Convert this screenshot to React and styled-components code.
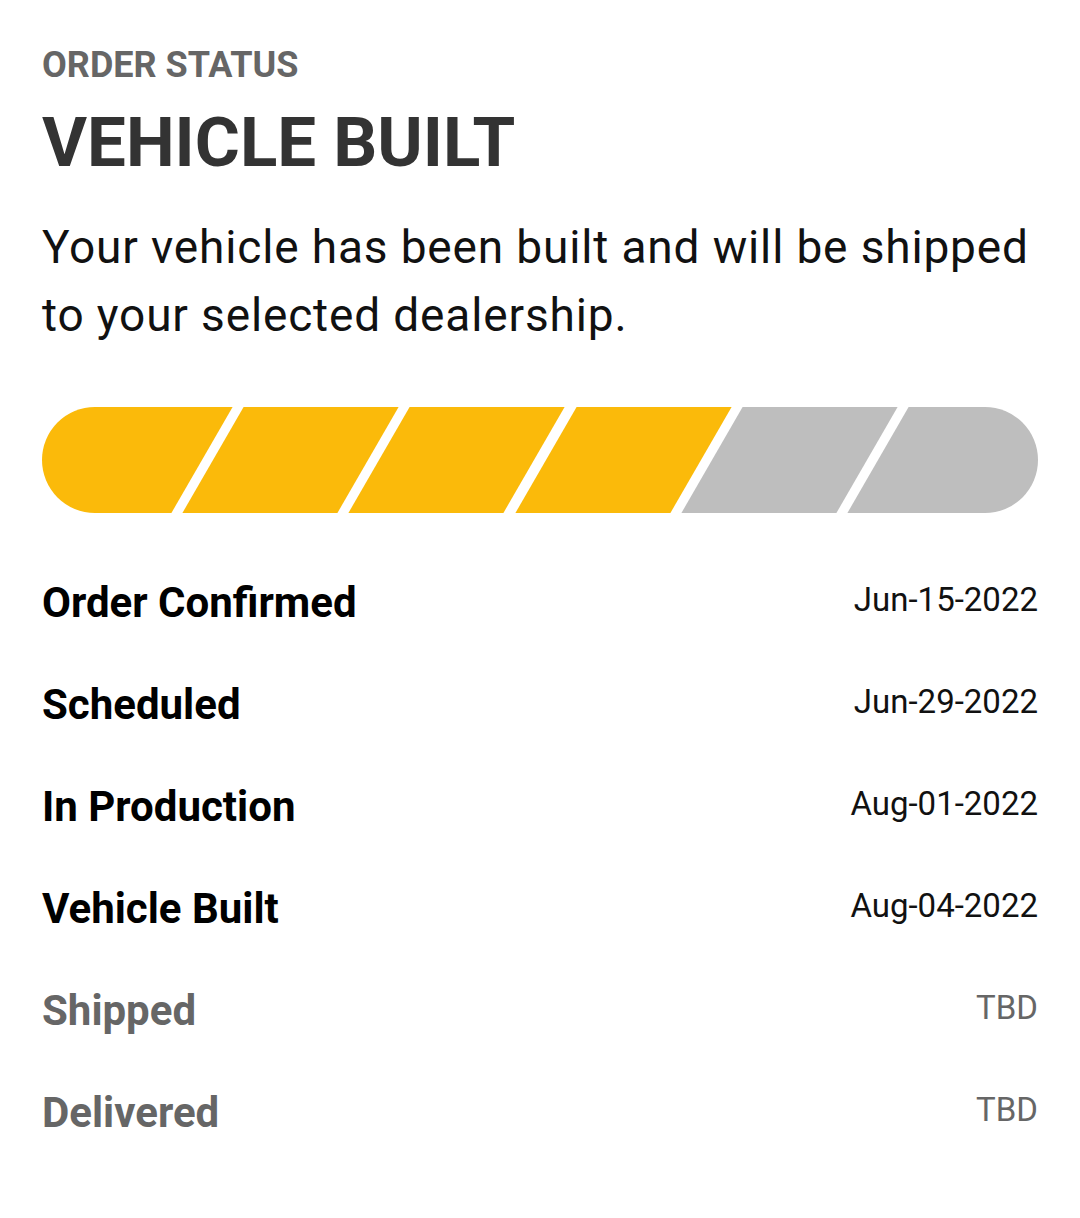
import React from 'react';
import styled, { createGlobalStyle } from 'styled-components';

const GlobalStyle = createGlobalStyle`
  html, body {
    margin: 0;
    padding: 0;
    background: #fff;
  }

  body {
    font-family: Roboto, 'Liberation Sans', Arial, sans-serif;
    -webkit-font-smoothing: antialiased;
  }
`;

const StyledStatusPage = styled.main`
  padding: 44px 42px 60px;
  width: 1080px;
  box-sizing: border-box;
`;

const Eyebrow = styled.div`
  font-size: 36px;
  line-height: 42px;
  font-weight: 700;
  color: #666;
  text-transform: uppercase;
`;

const Title = styled.h1`
  margin: 17px 0 0;
  font-size: 69px;
  line-height: 80px;
  font-weight: 700;
  color: #333;
`;

const Description = styled.p`
  margin: 30px 0 0;
  font-size: 46px;
  line-height: 68px;
  font-weight: 400;
  letter-spacing: 0.85px;
  color: #111;
`;

const StyledBar = styled.div`
  margin-top: 58px;
  height: 106px;
  border-radius: 53px;
  overflow: hidden;
  background: #fff;

  .track {
    display: flex;
    gap: 11px;
    height: 100%;
    margin: 0 -40px;
  }
`;

const Segment = styled.div`
  flex: ${({ $edge }) => ($edge ? '0 0 200px' : '1 1 0')};
  height: 100%;
  background: ${({ $done }) => ($done ? '#fbba0a' : '#bebebe')};
  transform: skewX(-30deg);
`;

const StyledSteps = styled.ul`
  list-style: none;
  margin: 66px 0 0;
  padding: 0;
  display: flex;
  flex-direction: column;
  gap: 54px;
`;

const Step = styled.li`
  display: flex;
  justify-content: space-between;
  align-items: flex-start;
  color: ${({ $done }) => ($done ? '#000' : '#666')};

  .label {
    font-size: 42px;
    line-height: 48px;
    font-weight: 700;
  }

  .date {
    font-size: 33px;
    line-height: 42px;
    font-weight: 400;
    color: ${({ $done }) => ($done ? '#111' : '#666')};
  }
`;

const App = () => {
  const segments = [true, true, true, true, false, false];
  const steps = [
    { name: 'Order Confirmed', date: 'Jun-15-2022', done: true },
    { name: 'Scheduled', date: 'Jun-29-2022', done: true },
    { name: 'In Production', date: 'Aug-01-2022', done: true },
    { name: 'Vehicle Built', date: 'Aug-04-2022', done: true },
    { name: 'Shipped', date: 'TBD', done: false },
    { name: 'Delivered', date: 'TBD', done: false },
  ];

  return (
    <>
      <GlobalStyle />
      <StyledStatusPage>
        <Eyebrow>Order Status</Eyebrow>
        <Title>VEHICLE BUILT</Title>
        <Description>
          Your vehicle has been built and will be shipped to your selected dealership.
        </Description>

        <StyledBar>
          <div className="track">
            {segments.map((done, i) => (
              <Segment key={i} $done={done} $edge={i === 0 || i === segments.length - 1} />
            ))}
          </div>
        </StyledBar>

        <StyledSteps>
          {steps.map(step => (
            <Step key={step.name} $done={step.done}>
              <span className="label">{step.name}</span>
              <span className="date">{step.date}</span>
            </Step>
          ))}
        </StyledSteps>
      </StyledStatusPage>
    </>
  );
};

export default App;
